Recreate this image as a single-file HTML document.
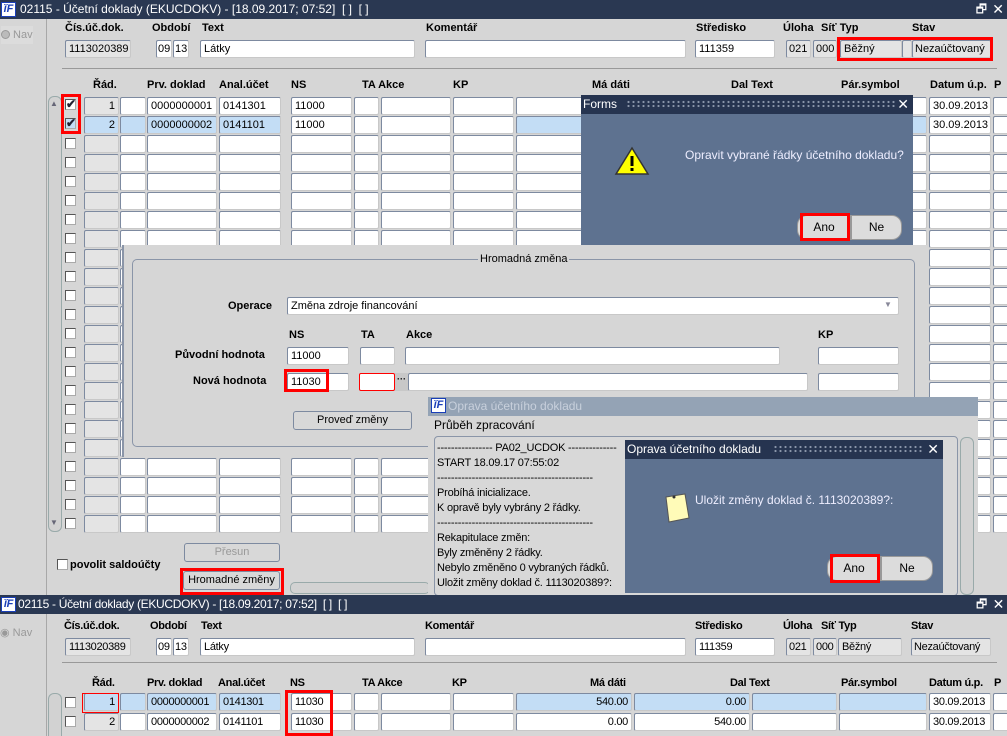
<!DOCTYPE html>
<html><head><meta charset="utf-8">
<style>
*{box-sizing:border-box;margin:0;padding:0}
html,body{width:1007px;height:736px;overflow:hidden}
body{background:#d6d6d6;font-family:"Liberation Sans",sans-serif;font-size:11px;color:#000;position:relative}
.a{position:absolute}
.tb{position:absolute;left:0;width:1007px;height:19px;background:#2a3852;color:#fff;font-size:12px;line-height:19px}
.logo{position:absolute;left:1px;top:2px;width:15px;height:15px;background:#fff;border:1px solid #1a3fb8;color:#1a3fb8;font:italic bold 11px/13px "Liberation Sans",sans-serif;text-align:center}
.l{position:absolute;font-weight:bold;font-size:11px;white-space:nowrap}
.f{position:absolute;background:#fff;border:1px solid #7d8aa0;border-right-color:#c8c8c8;border-bottom-color:#c8c8c8;border-radius:2px;height:18px;line-height:16px;padding-left:3px;white-space:nowrap;overflow:hidden}
.g{background:#e4e4e4}
.b{background:#c3ddf5}
.r{text-align:right;padding-right:3px}
.cb{position:absolute;width:11px;height:11px;border:1px solid #555;background:#fff;border-right-color:#aaa;border-bottom-color:#aaa}
.red{position:absolute;border:3px solid #f00}
.btn{position:absolute;background:#d8d8d8;border:1px solid #7d8aa0;border-radius:3px;text-align:center;line-height:16px;height:19px}
.hdr{position:absolute;height:19px;background:#263450;color:#fff;font-size:12px;line-height:19px;padding-left:2px}
.dots{position:absolute;top:5px;height:9px;background-image:radial-gradient(circle,#8a96aa 0.9px,transparent 1.3px);background-size:5px 4px}
.dbtn{position:absolute;background:#dcdcdc;border:1px solid #999;border-radius:10px;height:25px;line-height:23px;text-align:center;font-size:12px}
</style></head><body>

<div class="tb" style="top:0"><div class="logo">ĭF</div><span style="position:absolute;left:20px">02115 - Účetní doklady (EKUCDOKV) - [18.09.2017; 07:52]&nbsp; [ ]&nbsp; [ ]</span><span style="position:absolute;right:20px;top:0">🗗</span><span style="position:absolute;right:3px;top:0;font-size:14px">✕</span></div>
<div class="a" style="left:46px;top:19px;width:1px;height:576px;background:#a8a8a8"></div>
<div class="a" style="left:1px;top:26px;width:32px;height:18px;background:#dcdcdc;color:#999;font-size:11px;line-height:18px"><span style="display:inline-block;width:9px;height:9px;border-radius:50%;background:#bbb;border:1px solid #999;vertical-align:-1px"></span> Nav</div>

<div class="l" style="left:65px;top:22px">Čís.úč.dok.</div>
<div class="l" style="left:152px;top:22px">Období</div>
<div class="l" style="left:202px;top:22px">Text</div>
<div class="l" style="left:426px;top:22px">Komentář</div>
<div class="l" style="left:696px;top:22px">Středisko</div>
<div class="l" style="left:783px;top:22px">Úloha</div>
<div class="l" style="left:821px;top:22px">Síť Typ</div>
<div class="l" style="left:912px;top:22px">Stav</div>
<div class="f g" style="left:65px;top:40px;width:66px">1113020389</div>
<div class="f" style="left:156px;top:40px;width:16px;padding-left:1px">09</div>
<div class="f" style="left:173px;top:40px;width:16px;padding-left:1px">13</div>
<div class="f" style="left:200px;top:40px;width:215px">Látky</div>
<div class="f" style="left:425px;top:40px;width:261px"></div>
<div class="f" style="left:695px;top:40px;width:80px">111359</div>
<div class="f g" style="left:786px;top:40px;width:25px;padding-left:2px">021</div>
<div class="f g" style="left:813px;top:40px;width:24px;padding-left:2px">000</div>
<div class="f g" style="left:840px;top:40px;width:62px">Běžný</div>
<div class="f g" style="left:902px;top:40px;width:10px"></div>
<div class="f g" style="left:912px;top:40px;width:79px;padding-left:2px">Nezaúčtovaný</div>
<div class="red" style="left:837px;top:37px;width:156px;height:24px"></div>
<div class="a" style="left:62px;top:68px;width:935px;height:1px;background:#999"></div>

<div class="l" style="left:93px;top:79px">Řád.</div>
<div class="l" style="left:147px;top:79px">Prv. doklad</div>
<div class="l" style="left:219px;top:79px">Anal.účet</div>
<div class="l" style="left:291px;top:79px">NS</div>
<div class="l" style="left:362px;top:79px">TA Akce</div>
<div class="l" style="left:453px;top:79px">KP</div>
<div class="l" style="left:592px;top:79px">Má dáti</div>
<div class="l" style="left:731px;top:79px">Dal Text</div>
<div class="l" style="left:841px;top:79px">Pár.symbol</div>
<div class="l" style="left:930px;top:79px">Datum ú.p.</div>
<div class="l" style="left:994px;top:79px">P</div>

<div class="a" style="left:48px;top:96px;width:14px;height:436px;border:1px solid #9aa;border-radius:6px;background:#d2d2d2"></div>
<div class="a" style="left:50px;top:99px;font-size:8px;color:#667">▲</div>
<div class="a" style="left:50px;top:518px;font-size:8px;color:#667">▼</div>

<div id="grid"></div>

<div class="cb" style="left:65px;top:99px"></div>
<div class="cb" style="left:65px;top:118px;background:#c3ddf5"></div>
<div class="red" style="left:61px;top:94px;width:20px;height:40px"></div>
<div class="a" style="left:66px;top:97px;font-size:12px;font-weight:bold;color:#223">✔</div>
<div class="a" style="left:66px;top:116px;font-size:12px;font-weight:bold;color:#223">✔</div>

<div class="cb" style="left:57px;top:559px"></div>
<div class="l" style="left:70px;top:559px">povolit saldoúčty</div>
<div class="btn" style="left:184px;top:543px;width:96px;color:#999">Přesun</div>
<div class="btn" style="left:183px;top:571px;width:97px">Hromadné změny</div>
<div class="red" style="left:180px;top:568px;width:104px;height:27px"></div>
<div class="a" style="left:290px;top:582px;width:140px;height:12px;border:1px solid #9aa;border-radius:5px;background:#d2d2d2"></div>

<div class="a" style="left:122px;top:245px;width:806px;height:212px;background:#d6d6d6;border-left:2px solid #8a95a8"></div>
<div class="a" style="left:132px;top:259px;width:783px;height:188px;border:1px solid #8a95a8;border-radius:5px"></div>
<div class="a" style="left:478px;top:253px;background:#d6d6d6;padding:0 2px;font-size:11px">Hromadná změna</div>
<div class="l" style="left:228px;top:300px">Operace</div>
<div class="f" style="left:287px;top:297px;width:612px">Změna zdroje financování</div>
<div class="a" style="left:884px;top:300px;font-size:8px;color:#889">▼</div>
<div class="l" style="left:289px;top:329px">NS</div>
<div class="l" style="left:361px;top:329px">TA</div>
<div class="l" style="left:406px;top:329px">Akce</div>
<div class="l" style="left:818px;top:329px">KP</div>
<div class="l" style="left:175px;top:349px">Původní hodnota</div>
<div class="l" style="left:193px;top:375px">Nová hodnota</div>
<div class="f" style="left:287px;top:347px;width:62px">11000</div>
<div class="f" style="left:360px;top:347px;width:35px"></div>
<div class="f" style="left:405px;top:347px;width:375px"></div>
<div class="f" style="left:818px;top:347px;width:81px"></div>
<div class="f" style="left:287px;top:373px;width:62px">11030</div>
<div class="red" style="left:284px;top:369px;width:45px;height:23px"></div>
<div class="f" style="left:359px;top:373px;width:36px;border:1px solid #f00"></div>
<div class="a" style="left:395px;top:373px;width:13px;height:18px;background:#c8c8c8;font-size:9px;text-align:center;line-height:12px;font-weight:bold">···</div>
<div class="f" style="left:408px;top:373px;width:400px"></div>
<div class="f" style="left:818px;top:373px;width:81px"></div>
<div class="btn" style="left:293px;top:411px;width:119px">Proveď změny</div>

<div class="a" style="left:581px;top:95px;width:332px;height:150px;background:#5e7290"></div>
<div class="hdr" style="left:581px;top:95px;width:332px">Forms<div class="dots" style="left:45px;width:270px"></div><span style="position:absolute;right:4px;top:0;font-size:14px">✕</span></div>
<svg class="a" style="left:614px;top:146px" width="36" height="30"><polygon points="18,2 34,28 2,28" fill="#ff0" stroke="#333" stroke-width="1.5"/><rect x="16.5" y="10" width="3" height="10" fill="#000"/><rect x="16.5" y="22" width="3" height="3" fill="#000"/></svg>
<div class="a" style="left:685px;top:148px;color:#eef;font-size:12px">Opravit vybrané řádky účetního dokladu?</div>
<div class="dbtn" style="left:797px;top:215px;width:54px;border-radius:10px 0 0 10px">Ano</div>
<div class="dbtn" style="left:851px;top:215px;width:51px;border-radius:0 10px 10px 0">Ne</div>
<div class="red" style="left:800px;top:213px;width:50px;height:28px"></div>

<div class="a" style="left:428px;top:397px;width:550px;height:198px;background:#d6d6d6"></div>
<div class="a" style="left:428px;top:397px;width:550px;height:19px;background:#94a3b5;color:#c8d0dc;font-size:12px;line-height:19px;padding-left:20px">Oprava účetního dokladu</div>
<div class="logo" style="left:431px;top:398px">ĭF</div>
<div class="a" style="left:434px;top:418px;font-size:12px">Průběh zpracování</div>
<div class="a" style="left:434px;top:436px;width:524px;height:160px;border:1px solid #8a95a8;border-radius:4px;background:#d8d8d8"></div>
<div class="a" style="left:437px;top:441px;line-height:15px;font-size:11px;white-space:pre;letter-spacing:-0.2px">---------------- PA02_UCDOK --------------
START 18.09.17 07:55:02
---------------------------------------------
Probíhá inicializace.
K opravě byly vybrány 2 řádky.
---------------------------------------------
Rekapitulace změn:
Byly změněny 2 řádky.
Nebylo změněno 0 vybraných řádků.
Uložit změny doklad č. 1113020389?:</div>
<div class="a" style="left:960px;top:437px;width:14px;height:158px;border:1px solid #9aa;border-radius:6px;background:#d2d2d2"></div>

<div class="a" style="left:625px;top:440px;width:318px;height:153px;background:#5e7290"></div>
<div class="hdr" style="left:625px;top:440px;width:318px">Oprava účetního dokladu<div class="dots" style="left:148px;width:150px"></div><span style="position:absolute;right:4px;top:0;font-size:14px">✕</span></div>
<svg class="a" style="left:663px;top:492px" width="30" height="32"><polygon points="3,5 22,2 26,26 6,30" fill="#fffbb8" stroke="#555"/><circle cx="11" cy="5" r="1.5" fill="#333"/></svg>
<div class="a" style="left:695px;top:493px;color:#eef;font-size:12px">Uložit změny doklad č. 1113020389?:</div>
<div class="dbtn" style="left:827px;top:556px;width:54px;border-radius:10px 0 0 10px">Ano</div>
<div class="dbtn" style="left:881px;top:556px;width:52px;border-radius:0 10px 10px 0">Ne</div>
<div class="red" style="left:830px;top:554px;width:50px;height:29px"></div>

<div class="a" style="left:0;top:595px;width:1007px;height:141px;background:#d6d6d6;overflow:hidden">
<div class="tb" style="top:0;letter-spacing:-0.3px"><div class="logo">ĭF</div><span style="position:absolute;left:18px">02115 - Účetní doklady (EKUCDOKV) - [18.09.2017; 07:52]&nbsp; [ ]&nbsp; [ ]</span><span style="position:absolute;right:20px;top:0">🗗</span><span style="position:absolute;right:3px;top:0;font-size:14px">✕</span></div>
</div>
<div class="a" style="left:46px;top:614px;width:1px;height:122px;background:#a8a8a8"></div>
<div class="a" style="left:0;top:626px;color:#999;font-size:11px">◉ Nav</div>
<div style="letter-spacing:-0.3px">
<div class="l" style="left:64px;top:620px">Čís.úč.dok.</div>
<div class="l" style="left:150px;top:620px">Období</div>
<div class="l" style="left:201px;top:620px">Text</div>
<div class="l" style="left:425px;top:620px">Komentář</div>
<div class="l" style="left:695px;top:620px">Středisko</div>
<div class="l" style="left:783px;top:620px">Úloha</div>
<div class="l" style="left:821px;top:620px">Síť Typ</div>
<div class="l" style="left:911px;top:620px">Stav</div>
<div class="f g" style="left:65px;top:638px;width:66px">1113020389</div>
<div class="f" style="left:156px;top:638px;width:16px;padding-left:1px">09</div>
<div class="f" style="left:173px;top:638px;width:16px;padding-left:1px">13</div>
<div class="f" style="left:200px;top:638px;width:215px">Látky</div>
<div class="f" style="left:425px;top:638px;width:261px"></div>
<div class="f" style="left:695px;top:638px;width:80px">111359</div>
<div class="f g" style="left:786px;top:638px;width:25px;padding-left:2px">021</div>
<div class="f g" style="left:813px;top:638px;width:24px;padding-left:2px">000</div>
<div class="f g" style="left:838px;top:638px;width:64px">Běžný</div>
<div class="f g" style="left:911px;top:638px;width:80px;padding-left:2px">Nezaúčtovaný</div>
<div class="a" style="left:62px;top:662px;width:935px;height:1px;background:#999"></div>
<div class="l" style="left:92px;top:677px">Řád.</div>
<div class="l" style="left:147px;top:677px">Prv. doklad</div>
<div class="l" style="left:218px;top:677px">Anal.účet</div>
<div class="l" style="left:290px;top:677px">NS</div>
<div class="l" style="left:362px;top:677px">TA Akce</div>
<div class="l" style="left:452px;top:677px">KP</div>
<div class="l" style="left:590px;top:677px">Má dáti</div>
<div class="l" style="left:730px;top:677px">Dal Text</div>
<div class="l" style="left:841px;top:677px">Pár.symbol</div>
<div class="l" style="left:929px;top:677px">Datum ú.p.</div>
<div class="l" style="left:994px;top:677px">P</div>
<div class="a" style="left:48px;top:693px;width:14px;height:43px;border:1px solid #9aa;border-bottom:none;border-radius:6px 6px 0 0;background:#d2d2d2"></div>
<div class="cb" style="left:65px;top:697px"></div>
<div class="cb" style="left:65px;top:716px"></div>
<div id="grid2"></div>
<div class="a" style="left:82px;top:693px;width:37px;height:20px;border:1px solid #f00"></div>
<div class="red" style="left:285px;top:690px;width:48px;height:46px"></div>
</div>

<script>
var cols=[[84,35],[120,26],[147,70],[219,62],[291,61],[354,25],[381,70],[453,61],[516,116],[634,116],[752,85],[839,88],[929,62],[993,16]];
function row(y,vals,cls){var h='';for(var i=0;i<cols.length;i++){var c=cols[i];var k='f '+(cls[i]||'');var hh=Math.min(18,736-y);h+='<div class="'+k+'" style="left:'+c[0]+'px;top:'+y+'px;width:'+c[1]+'px;height:'+hh+'px">'+(vals[i]||'')+'</div>';}return h;}
var g='';
for(var r=0;r<23;r++){var y=97+r*19;var v=[],c=[];c[0]='g r';
 if(r==0){v=['1','','0000000001','0141301','11000'];v[12]='30.09.2013';}
 if(r==1){v=['2','','0000000002','0141101','11000'];v[12]='30.09.2013';c=['b r','b','b','b','','','','','b','b','b','b','',''];}
 if(r>=2)g+='<div class="cb" style="left:65px;top:'+(y+3)+'px"></div>';
 g+=row(y,v,c);}
document.getElementById('grid').innerHTML=g;
var g2='';
g2+=row(693,['1','','0000000001','0141301','11030','','','','540.00','0.00','','','30.09.2013',''],['b r','b','b','b','','','','','b r','b r','b','b','','']);
g2+=row(713,['2','','0000000002','0141101','11030','','','','0.00','540.00','','','30.09.2013',''],['g r','','','','','','','','r','r','','','','']);
document.getElementById('grid2').innerHTML=g2;
</script>
</body></html>
